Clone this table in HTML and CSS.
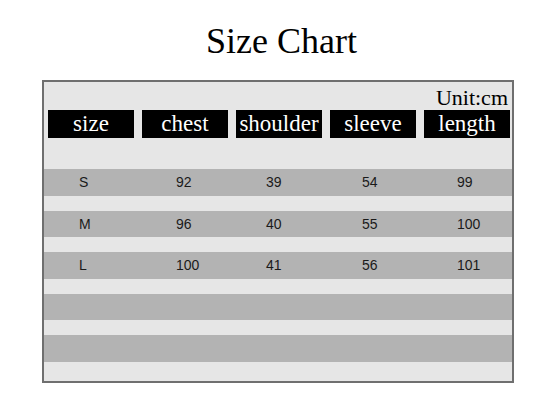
FILE: index.html
```html
<!DOCTYPE html>
<html>
<head>
<meta charset="utf-8">
<link rel="stylesheet" href="styles.css">
</head>
<body>
<h1 class="title">Size Chart</h1>
<div class="panel">
  <div class="unit">Unit:cm</div>
  <div class="head">
    <div class="hcell">size</div>
    <div class="hcell">chest</div>
    <div class="hcell">shoulder</div>
    <div class="hcell">sleeve</div>
    <div class="hcell">length</div>
  </div>
  <div class="rows">
    <div class="row"><span>S</span><span>92</span><span>39</span><span>54</span><span>99</span></div>
    <div class="gap"></div>
    <div class="row"><span>M</span><span>96</span><span>40</span><span>55</span><span>100</span></div>
    <div class="gap"></div>
    <div class="row"><span>L</span><span>100</span><span>41</span><span>56</span><span>101</span></div>
    <div class="gap"></div>
    <div class="row"></div>
    <div class="gap"></div>
    <div class="row"></div>
  </div>
</div>
</body>
</html>
```

FILE: styles.css
```css
html, body {
  margin: 0;
  padding: 0;
  background: #ffffff;
}
body {
  width: 554px;
  height: 406px;
  overflow: hidden;
}
.title {
  margin: 0;
  padding: 21px 0 0 9px;
  height: 40px;
  line-height: 40px;
  text-align: center;
  font-family: "Liberation Serif", serif;
  font-weight: normal;
  font-size: 36px;
  color: #000;
}
.panel {
  box-sizing: border-box;
  margin: 19px 0 0 42px;
  width: 472px;
  height: 303px;
  border: 2px solid #6f6f6f;
  background: #e6e6e6;
  padding-top: 4px;
}
.unit {
  height: 24px;
  line-height: 24px;
  text-align: right;
  padding-right: 4px;
  font-family: "Liberation Serif", serif;
  font-size: 22px;
  color: #000;
}
.head {
  display: flex;
  gap: 8px;
  padding-left: 4px;
  height: 28px;
}
.hcell {
  width: 86px;
  height: 28px;
  background: #000;
  color: #fff;
  text-align: center;
  line-height: 28px;
  font-family: "Liberation Serif", serif;
  font-size: 23px;
}
.rows {
  margin-top: 31px;
  display: flex;
  flex-direction: column;
}
.row {
  height: 26.5px;
  background: #b3b3b3;
  display: grid;
  grid-template-columns: 97px 90px 96px 95px auto;
  padding-left: 35px;
  line-height: 26.5px;
  font-family: "Liberation Sans", Arial, sans-serif;
  font-size: 14px;
  color: #1a1a1a;
}
.gap {
  height: 15px;
}
```
